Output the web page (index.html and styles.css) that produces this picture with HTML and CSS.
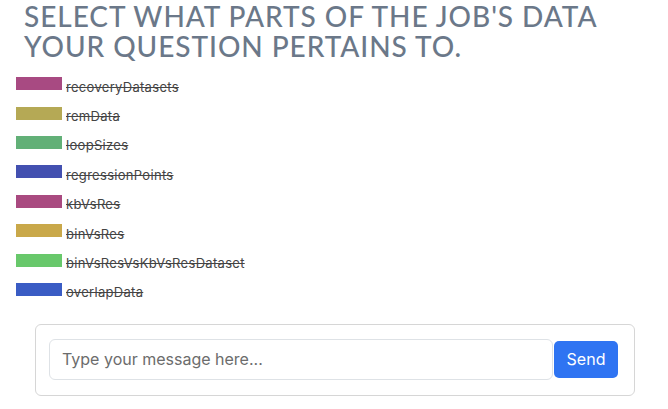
FILE: index.html
```html
<!DOCTYPE html>
<html>
<head>
<meta charset="utf-8">
<link rel="stylesheet" href="styles.css">
</head>
<body>
<div class="page">
  <h1 class="title">Select what parts of the job's data your question pertains to.</h1>
  <ul class="legend">
    <li class="item"><span class="swatch c1"></span><span class="label">recoveryDatasets</span></li>
    <li class="item"><span class="swatch c2"></span><span class="label">remData</span></li>
    <li class="item"><span class="swatch c3"></span><span class="label">loopSizes</span></li>
    <li class="item"><span class="swatch c4"></span><span class="label">regressionPoints</span></li>
    <li class="item"><span class="swatch c5"></span><span class="label">kbVsRes</span></li>
    <li class="item"><span class="swatch c6"></span><span class="label">binVsRes</span></li>
    <li class="item"><span class="swatch c7"></span><span class="label">binVsResVsKbVsResDataset</span></li>
    <li class="item"><span class="swatch c8"></span><span class="label">overlapData</span></li>
  </ul>
  <div class="chat">
    <input class="msg" type="text" placeholder="Type your message here...">
    <button class="send">Send</button>
  </div>
</div>
</body>
</html>
```

FILE: styles.css
```css
* { box-sizing: border-box; }
html, body { margin: 0; padding: 0; background: #fff; }
body { font-family: "Inter", "Liberation Sans", sans-serif; }
.page { width: 668px; height: 409px; overflow: hidden; padding-top: 1px; }
.title {
  margin: 0;
  padding: 0 40px 0 24px;
  font-family: "Lato", "Open Sans", sans-serif;
  font-weight: 500;
  font-size: 28px;
  line-height: 30px;
  letter-spacing: 0.95px;
  text-transform: uppercase;
  color: #6b7889;
}
.legend {
  list-style: none;
  margin: 16px 0 0 0;
  padding: 0 0 0 16px;
  display: flex;
  flex-direction: column;
  gap: 16px;
}
.item { display: flex; align-items: center; gap: 4px; height: 13.4px; }
.swatch { width: 46px; height: 13px; flex: none; }
.label {
  font-size: 13px;
  letter-spacing: 0.3px;
  color: #444;
  text-decoration: line-through;
  position: relative;
  top: 3px;
}
.c1 { background: #a84a82; }
.c2 { background: #b5a955; }
.c3 { background: #62b077; }
.c4 { background: #4350b0; }
.c5 { background: #a94a80; }
.c6 { background: #c9a84a; }
.c7 { background: #68c86b; }
.c8 { background: #3a5cc4; }
.chat {
  margin: 28px 0 0 35px;
  width: 600px;
  height: 72px;
  border: 1px solid #d6d6d6;
  border-radius: 6px;
  padding: 0 16px 2px 13px;
  display: flex;
  align-items: center;
}
.msg {
  flex: 1;
  height: 41px;
  border: 1px solid #dee2e6;
  border-radius: 6px;
  padding: 0 12px;
  font-family: "Inter", sans-serif;
  font-size: 16px;
  color: #333;
  outline: none;
}
.msg::placeholder { color: #6c6c6c; }
.send {
  flex: none;
  width: 64px;
  height: 37px;
  border: none;
  border-radius: 5px;
  background: #2f74f2;
  color: #fff;
  font-family: "Inter", sans-serif;
  font-size: 16px;
  margin-left: 1px;
}
```
